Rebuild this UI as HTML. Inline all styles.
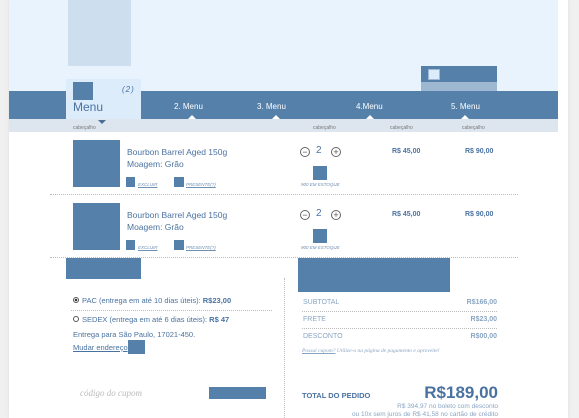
<!DOCTYPE html>
<html><head><meta charset="utf-8"><style>
*{margin:0;padding:0;box-sizing:border-box}
body{width:579px;height:418px;overflow:hidden;background:#f0f0f0;font-family:"Liberation Sans","DejaVu Sans",sans-serif;color:#4a72a0;position:relative}
.a{position:absolute}
.b{background:#5580aa}
.t{position:absolute;white-space:nowrap}
.dot{position:absolute;border-top:1px dotted #bbb;height:0}
.sm{font-size:4.5px;font-style:italic;text-decoration:underline;color:#6f8fb3}
.cab{font-size:5px;color:#777;top:125px}
.tri{position:absolute;width:0;height:0;border-left:4px solid transparent;border-right:4px solid transparent;border-bottom:4px solid #fff;top:115px}
.circ{position:absolute;width:10px;height:10px;border:1px solid #666;border-radius:50%;font-size:9px;line-height:8px;text-align:center;color:#555}
</style></head><body>
<div class="a" style="left:9px;top:0;width:559px;height:418px;background:#fff;box-shadow:0 0 4px #ddd"></div>
<div class="a" style="left:9px;top:0;width:549px;height:91px;background:#e8f3fd"></div>
<div class="a" style="left:68px;top:0;width:63px;height:66px;background:#cddfee"></div>
<div class="a b" style="left:9px;top:91px;width:549px;height:28px"></div>
<div class="a" style="left:9px;top:119px;width:549px;height:13px;background:#dde6ef"></div>
<div class="a" style="left:66px;top:79px;width:75px;height:40px;background:#dcecfb"></div>
<div class="a b" style="left:73px;top:82px;width:20px;height:18px"></div>
<div class="t" style="left:122px;top:85px;font-size:8px;font-style:italic;letter-spacing:1px">(2)</div>
<div class="t" style="left:73px;top:100px;font-size:12px">Menu</div>
<div class="a" style="left:98px;top:120px;border-left:4px solid transparent;border-right:4px solid transparent;border-top:4px solid #4a6f96"></div>
<div class="a b" style="left:421px;top:66px;width:76px;height:16px"></div>
<div class="a" style="left:421px;top:82px;width:76px;height:9px;background:#9fb8d2"></div>
<div class="a" style="left:428px;top:69px;width:12px;height:11px;background:#dcecfb;border:1px solid #9fb8d2"></div>
<div class="t" style="left:174px;top:102px;font-size:8px;color:#fff">2. Menu</div>
<div class="t" style="left:257px;top:102px;font-size:8px;color:#fff">3. Menu</div>
<div class="t" style="left:356px;top:102px;font-size:8px;color:#fff">4.Menu</div>
<div class="t" style="left:451px;top:102px;font-size:8px;color:#fff">5. Menu</div>
<div class="tri" style="left:188px"></div><div class="tri" style="left:272px"></div><div class="tri" style="left:366px"></div><div class="tri" style="left:461px"></div>
<div class="t cab" style="left:73px">cabeçalho</div>
<div class="t cab" style="left:313px">cabeçalho</div>
<div class="t cab" style="left:390px">cabeçalho</div>
<div class="t cab" style="left:462px">cabeçalho</div>

<!-- row1 -->
<div class="a b" style="left:73px;top:140px;width:47px;height:47px"></div>
<div class="t" style="left:127px;top:147px;font-size:8.5px">Bourbon Barrel Aged 150g</div>
<div class="t" style="left:127px;top:159px;font-size:8.5px">Moagem: Grão</div>
<div class="a b" style="left:126px;top:177px;width:9px;height:10px"></div><div class="t sm" style="left:138px;top:182px">EXCLUIR</div>
<div class="a b" style="left:174px;top:177px;width:10px;height:10px"></div><div class="t sm" style="left:186px;top:182px">PRESENTE(?)</div>
<div class="circ" style="left:300px;top:147px">−</div><div class="t" style="left:316px;top:145px;font-size:10px">2</div><div class="circ" style="left:331px;top:147px">+</div>
<div class="a b" style="left:313px;top:166px;width:14px;height:14px"></div>
<div class="t sm" style="left:301px;top:182px;text-decoration:none">900 EM ESTOQUE</div>
<div class="t" style="left:392px;top:148px;font-size:7px;font-weight:bold">R$ 45,00</div>
<div class="t" style="left:465px;top:148px;font-size:7px;font-weight:bold">R$ 90,00</div>
<div class="dot" style="left:50px;top:194px;width:468px"></div>
<!-- row2 -->
<div class="a b" style="left:73px;top:203px;width:47px;height:47px"></div>
<div class="t" style="left:127px;top:210px;font-size:8.5px">Bourbon Barrel Aged 150g</div>
<div class="t" style="left:127px;top:222px;font-size:8.5px">Moagem: Grão</div>
<div class="a b" style="left:126px;top:240px;width:9px;height:10px"></div><div class="t sm" style="left:138px;top:245px">EXCLUIR</div>
<div class="a b" style="left:174px;top:240px;width:10px;height:10px"></div><div class="t sm" style="left:186px;top:245px">PRESENTE(?)</div>
<div class="circ" style="left:300px;top:210px">−</div><div class="t" style="left:316px;top:208px;font-size:10px">2</div><div class="circ" style="left:331px;top:210px">+</div>
<div class="a b" style="left:313px;top:229px;width:14px;height:14px"></div>
<div class="t sm" style="left:301px;top:245px;text-decoration:none">900 EM ESTOQUE</div>
<div class="t" style="left:392px;top:211px;font-size:7px;font-weight:bold">R$ 45,00</div>
<div class="t" style="left:465px;top:211px;font-size:7px;font-weight:bold">R$ 90,00</div>
<div class="dot" style="left:50px;top:257px;width:468px"></div>

<!-- bottom left -->
<div class="a b" style="left:66px;top:258px;width:75px;height:21px"></div>
<div class="a" style="left:284px;top:278px;height:140px;border-left:1px dotted #bbb"></div>
<div class="a" style="left:73px;top:297px;width:6px;height:6px;border:1px solid #555;border-radius:50%;background:radial-gradient(#333 40%,#fff 50%)"></div>
<div class="t" style="left:82px;top:296px;font-size:7.5px">PAC (entrega em até 10 dias úteis): <b>R$23,00</b></div>
<div class="dot" style="left:71px;top:310px;width:201px"></div>
<div class="a" style="left:73px;top:316px;width:6px;height:6px;border:1px solid #555;border-radius:50%"></div>
<div class="t" style="left:82px;top:315px;font-size:7.5px">SEDEX (entrega em até 6 dias úteis): <b>R$ 47</b></div>
<div class="t" style="left:73px;top:330px;font-size:7.5px">Entrega para São Paulo, 17021-450.</div>
<div class="t" style="left:73px;top:343px;font-size:7.5px;text-decoration:underline">Mudar endereço</div>
<div class="a b" style="left:128px;top:340px;width:17px;height:14px"></div>
<div class="t" style="left:80px;top:388px;font-size:9px;font-style:italic;font-family:'Liberation Serif',serif;color:#bbb">código do cupom</div>
<div class="a b" style="left:209px;top:387px;width:57px;height:12px"></div>

<!-- bottom right -->
<div class="a b" style="left:298px;top:258px;width:152px;height:34px"></div>
<div class="t" style="left:303px;top:299px;font-size:7px;color:#8aa5c3">SUBTOTAL</div><div class="t" style="right:82px;top:299px;font-size:7px;font-weight:bold;color:#8aa5c3">R$166,00</div>
<div class="dot" style="left:302px;top:311px;width:195px"></div>
<div class="t" style="left:303px;top:316px;font-size:7px;color:#8aa5c3">FRETE</div><div class="t" style="right:82px;top:316px;font-size:7px;font-weight:bold;color:#8aa5c3">R$23,00</div>
<div class="dot" style="left:302px;top:328px;width:195px"></div>
<div class="t" style="left:303px;top:333px;font-size:7px;color:#8aa5c3">DESCONTO</div><div class="t" style="right:82px;top:333px;font-size:7px;font-weight:bold;color:#8aa5c3">R$00,00</div>
<div class="t" style="left:302px;top:348px;font-size:5.5px;font-style:italic;font-family:'Liberation Serif',serif;color:#8aa5c3"><u>Possui cupom?</u> Utilize-o na página de pagamento e aproveite!</div>
<div class="t" style="left:302px;top:391px;font-size:7.5px;font-weight:bold">TOTAL DO PEDIDO</div>
<div class="t" style="right:81px;top:383px;font-size:17px;font-weight:bold">R$189,00</div>
<div class="t" style="right:81px;top:403px;font-size:6.5px;color:#8aa5c3">R$ 394,97 no boleto com desconto</div>
<div class="t" style="right:81px;top:411px;font-size:6.5px;color:#8aa5c3">ou 10x sem juros de R$ 41,58 no cartão de crédito</div>
</body></html>
